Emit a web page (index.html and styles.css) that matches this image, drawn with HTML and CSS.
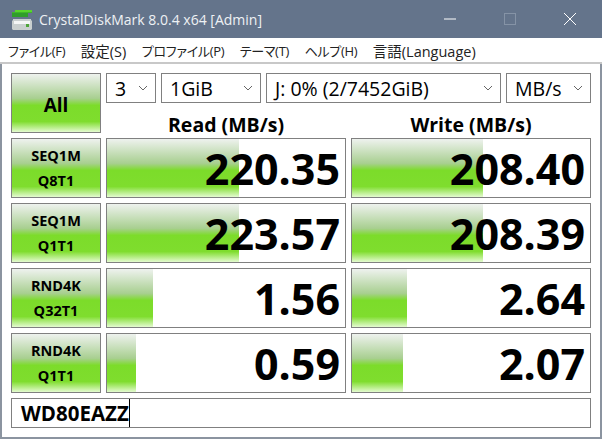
FILE: index.html
```html
<!DOCTYPE html>
<html>
<head>
	<title>CrystalDiskMark</title>
	<link rel="stylesheet" href="styles.css">
</head>
<body>
<div class="window">
	<div class="titlebar">
		<svg class="appicon" width="22" height="24" viewBox="0 0 22 24">
			<path d="M5 3h17v2H5z" fill="#58d62c"/>
			<path d="M2 5h20v1H2z" fill="#3fb52a"/>
			<path d="M2 6h16v4H2z" fill="#2f9e2a"/>
			<path d="M3 12h18v1l1 1v8l-1 1H3l-1-1v-8l1-1z" fill="#c9cfcf"/>
			<path d="M4 14h16v3H4z" fill="#f4f6f6"/>
			<path d="M16 17h3v3h-3z" fill="#4fa53a"/>
		</svg>
		<span class="title">CrystalDiskMark 8.0.4 x64 [Admin]</span>
		<div class="winbtns">
			<svg width="14" height="14" viewBox="0 0 14 14"><path d="M1 7h12" stroke="#fff" stroke-width="1"/></svg>
			<svg width="14" height="14" viewBox="0 0 14 14"><rect x="1.5" y="1.5" width="11" height="11" fill="none" stroke="#8593a6"/></svg>
			<svg width="14" height="14" viewBox="0 0 14 14"><path d="M1 1l12 12M13 1L1 13" stroke="#fff" stroke-width="1"/></svg>
		</div>
	</div>
	<div class="menubar">
		<span class="kana">ファイル(F)</span>
		<span class="kanji">設定(S)</span>
		<span class="kana">プロファイル(P)</span>
		<span class="kana">テーマ(T)</span>
		<span class="kana">ヘルプ(H)</span>
		<span class="kanji">言語(Language)</span>
	</div>
	<div class="client">
		<div class="top">
			<button class="gradbtn allbtn">All</button>
			<div class="topright">
				<div class="combos">
					<div class="combo c-count"><span>3</span><svg width="10" height="6" viewBox="0 0 10 6"><path d="M1 1l4 4 4-4" fill="none" stroke="#666"/></svg></div>
					<div class="combo c-size"><span>1GiB</span><svg width="10" height="6" viewBox="0 0 10 6"><path d="M1 1l4 4 4-4" fill="none" stroke="#666"/></svg></div>
					<div class="combo c-drive"><span>J: 0% (2/7452GiB)</span><svg width="10" height="6" viewBox="0 0 10 6"><path d="M1 1l4 4 4-4" fill="none" stroke="#666"/></svg></div>
					<div class="combo c-unit"><span>MB/s</span><svg width="10" height="6" viewBox="0 0 10 6"><path d="M1 1l4 4 4-4" fill="none" stroke="#666"/></svg></div>
				</div>
				<div class="heads">
					<div>Read (MB/s)</div>
					<div>Write (MB/s)</div>
				</div>
			</div>
		</div>
		<div class="results">
			<button class="gradbtn testbtn"><span>SEQ1M</span><span>Q8T1</span></button>
			<div class="meter"><div class="bar" style="width:132px"></div><span class="value">220.35</span></div>
			<div class="meter"><div class="bar" style="width:131px"></div><span class="value">208.40</span></div>

			<button class="gradbtn testbtn"><span>SEQ1M</span><span>Q1T1</span></button>
			<div class="meter"><div class="bar" style="width:132px"></div><span class="value">223.57</span></div>
			<div class="meter"><div class="bar" style="width:131px"></div><span class="value">208.39</span></div>

			<button class="gradbtn testbtn"><span>RND4K</span><span>Q32T1</span></button>
			<div class="meter"><div class="bar" style="width:46px"></div><span class="value">1.56</span></div>
			<div class="meter"><div class="bar" style="width:55px"></div><span class="value">2.64</span></div>

			<button class="gradbtn testbtn"><span>RND4K</span><span>Q1T1</span></button>
			<div class="meter"><div class="bar" style="width:29px"></div><span class="value">0.59</span></div>
			<div class="meter"><div class="bar" style="width:51px"></div><span class="value">2.07</span></div>
		</div>
		<div class="comment"><span>WD80EAZZ</span><i class="caret"></i></div>
	</div>
</div>
</body>
</html>
```

FILE: styles.css
```css
*{
	padding: 0px;
	margin: 0px;
	box-sizing: border-box;
}
html, body{
	width: 602px;
	height: 439px;
	overflow: hidden;
	background: #fff;
}
body{
	font-family: "Open Sans", "Noto Sans CJK JP", sans-serif;
	color: #000;
}
.window{
	height: 439px;
	display: flex;
	flex-direction: column;
}
.titlebar{
	height: 38px;
	background: #64748b;
	display: flex;
	align-items: center;
	padding-left: 10px;
	color: #fff;
}
.appicon{
	flex: none;
}
.title{
	margin-left: 7px;
	font-size: 14px;
	color: #eef1f4;
}
.winbtns{
	margin-left: auto;
	display: flex;
	gap: 46px;
	padding-right: 25px;
}
.menubar{
	height: 26px;
	display: flex;
	align-items: center;
	gap: 15.5px;
	padding-left: 8px;
	font-feature-settings: "palt";
	border-bottom: 2px solid #c8c8c8;
	color: #222;
}
.kana{
	font-size: 13px;
	letter-spacing: -0.3px;
}
.kanji{
	font-size: 14.5px;
}
.client{
	flex: 1;
	padding: 9px;
	border: 2px solid #8b94a0;
	border-top: none;
	display: flex;
	flex-direction: column;
	gap: 5px;
}
.top{
	display: flex;
	gap: 5px;
	height: 60px;
}
.gradbtn{
	border: 1px solid #808080;
	font-family: inherit;
	font-weight: 700;
	color: #000;
	background: linear-gradient(to bottom, #eef2ee 0%, #a8cf90 42%, #7cdc2a 54%, #7fdd2e 82%, #e4fbd0 100%);
}
.allbtn{
	width: 90px;
	font-size: 19px;
	padding-top: 3px;
}
.topright{
	width: 485px;
}
.combos{
	display: flex;
	height: 30px;
	gap: 5px;
}
.combo{
	border: 1px solid #808080;
	display: flex;
	align-items: center;
	justify-content: space-between;
	padding: 0 7px 0 8px;
	font-size: 19.5px;
}
.c-count{
	width: 50px;
}
.c-size{
	width: 100px;
}
.c-drive{
	width: 235px;
}
.c-unit{
	width: 85px;
}
.heads{
	display: grid;
	grid-template-columns: 240px 240px;
	gap: 5px;
	height: 30px;
	padding-top: 13px;
	line-height: 17px;
	text-align: center;
	font-size: 19.5px;
	font-weight: 700;
}
.results{
	display: grid;
	grid-template-columns: 90px 240px 240px;
	grid-auto-rows: 60px;
	gap: 5px;
}
.testbtn{
	display: flex;
	flex-direction: column;
	align-items: center;
	justify-content: center;
	gap: 7px;
	font-size: 14.5px;
	line-height: 18px;
}
.meter{
	border: 1px solid #808080;
	position: relative;
	display: flex;
	align-items: center;
	justify-content: flex-end;
	padding-right: 5px;
}
.bar{
	position: absolute;
	left: 0;
	top: 0;
	bottom: 0;
	background: linear-gradient(to bottom, #eef2ee 0%, #a8cf90 42%, #7cdc2a 54%, #7fdd2e 82%, #e4fbd0 100%);
}
.value{
	position: relative;
	font-size: 43px;
	font-weight: 700;
	line-height: 1;
}
.comment{
	width: 580px;
	height: 30px;
	border: 1px solid #808080;
	display: flex;
	align-items: center;
	padding-left: 9px;
	font-size: 20.5px;
	font-weight: 700;
}
.caret{
	width: 1px;
	height: 28px;
	background: #000;
}
```
